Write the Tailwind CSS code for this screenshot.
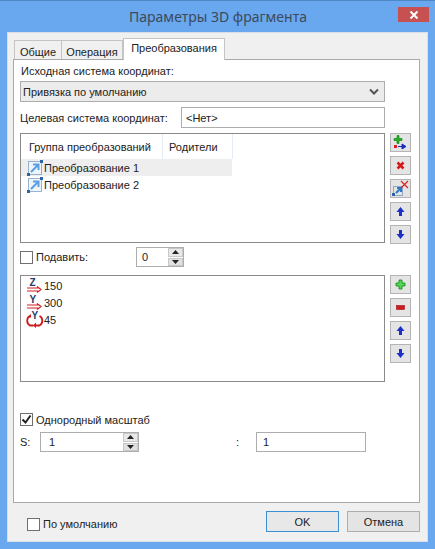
<!DOCTYPE html>
<html><head><meta charset="utf-8"><script src="https://cdn.jsdelivr.net/npm/@tailwindcss/browser@4"></script></head>
<body class="m-0 overflow-hidden">
<div class="relative w-[435px] h-[549px] bg-[#69a7ef] font-['Liberation_Sans',sans-serif] text-[11px] leading-[14px] text-[#222] flex flex-col">
  <div class="h-[1px] bg-[#4d86c4]"></div>
  <div class="h-[31px] flex items-center justify-center text-[14px] font-['Noto_Sans',sans-serif] text-[#3c4a5a] pl-[1px]">Параметры 3D фрагмента</div>
  <div class="absolute left-[398px] top-[7px] w-[31px] h-[15px] bg-[#c75050] flex items-center justify-center">
    <svg width="10" height="10" viewBox="0 0 10 10"><path d="M1.500 1.500l7 7M8.500 1.500l-7 7" stroke="#fff" stroke-width="2"/></svg>
  </div>
  <div class="mx-[7px] w-[421px] h-[510px] bg-[#f0f0f0] border border-[#d8dfe8] px-[5px] flex flex-col">
    <!-- tabs -->
    <div class="h-[27px] flex items-end pl-[1px] relative z-10">
      <div class="w-[48px] h-[19px] mb-[1px] bg-[#f0f0f0] border border-[#c4c4c4] border-b-0 flex items-center justify-center pt-[3px]">Общие</div>
      <div class="w-[61px] h-[19px] mb-[1px] bg-[#f0f0f0] border border-[#c4c4c4] border-l-0 border-b-0 flex items-center justify-center pt-[3px]">Операция</div>
      <div class="w-[102px] h-[22px] bg-white border border-[#c4c4c4] border-b-0 flex items-start justify-center pt-[2px]">Преобразования</div>
    </div>
    <!-- panel -->
    <div class="w-[407px] h-[444px] bg-white border border-[#a9a9a9] -mt-[1px] px-[6px] flex flex-col">
      <div class="h-[21px] flex items-end pl-[1px] pb-[3px]">Исходная система координат:</div>
      <div class="w-[365px] h-[21px] bg-[#ececec] border border-[#adadad] flex items-center justify-between pl-[2px] pr-[5px]">
        <span>Привязка по умолчанию</span>
        <svg width="10" height="8" viewBox="0 0 10 8"><path d="M1 1.500l4 4 4-4" fill="none" stroke="#555" stroke-width="2"/></svg>
      </div>
      <div class="h-[21px] mt-[5px] flex items-center justify-between w-[365px]">
        <span>Целевая система координат:</span>
        <div class="w-[204px] h-[21px] border border-[#adadad] bg-white flex items-center pl-[4px]">&lt;Нет&gt;</div>
      </div>
      <!-- list 1 -->
      <div class="mt-[5px] flex gap-[5px]">
        <div class="w-[365px] h-[110px] border border-[#8a8a8a] bg-white">
          <div class="h-[25px] flex">
            <div class="w-[142px] border-r border-[#e5ecf5] flex items-center pl-[8px]">Группа преобразований</div>
            <div class="w-[70px] border-r border-[#e5ecf5] flex items-center pl-[6px]">Родители</div>
          </div>
          <div class="w-[211px] h-[17px] bg-[#eeeeee] flex items-center pl-[6px] gap-[1px]">
            <svg width="16" height="16" viewBox="0 0 16 16"><rect x="1.500" y="1.500" width="13" height="13" fill="#eef5fc" stroke="#3b6ea8" stroke-dasharray="1 1"/><rect x="0" y="13" width="3" height="3" fill="#2d63a8"/><rect x="13" y="0" width="3" height="3" fill="#2d63a8"/><path d="M4 12l7-7M6 4.500h5.500V10" fill="none" stroke="#5aa0e0" stroke-width="2"/></svg>
            <span>Преобразование 1</span>
          </div>
          <div class="w-[211px] h-[17px] flex items-center pl-[6px] gap-[1px]">
            <svg width="16" height="16" viewBox="0 0 16 16"><rect x="1.500" y="1.500" width="13" height="13" fill="#eef5fc" stroke="#3b6ea8" stroke-dasharray="1 1"/><rect x="0" y="13" width="3" height="3" fill="#2d63a8"/><rect x="13" y="0" width="3" height="3" fill="#2d63a8"/><path d="M4 12l7-7M6 4.500h5.500V10" fill="none" stroke="#5aa0e0" stroke-width="2"/></svg>
            <span>Преобразование 2</span>
          </div>
        </div>
        <div class="flex flex-col gap-[4px]">
          <div class="w-[21px] h-[19px] bg-[#e4e4e4] border border-[#b4b4b4] flex items-center justify-center">
            <svg width="15" height="15" viewBox="0 0 15 15"><path d="M4 0.500h2v3h3v2H6v3H4V5.500H1v-2h3z" fill="#22b522" stroke="#0a7a0a" stroke-width=".6"/><rect x="1" y="10" width="3" height="3" fill="#d22"/><path d="M5 11.500h6M9 9l4 2.500L9 14z" fill="#1c2fb8" stroke="#1c2fb8"/></svg>
          </div>
          <div class="w-[21px] h-[19px] bg-[#e4e4e4] border border-[#b4b4b4] flex items-center justify-center">
            <svg width="9" height="9" viewBox="0 0 9 9"><path d="M1.500 1.500l6 6M7.500 1.500l-6 6" stroke="#d81818" stroke-width="2.500"/></svg>
          </div>
          <div class="w-[21px] h-[19px] bg-[#e4e4e4] border border-[#b4b4b4] flex items-center justify-center">
            <svg width="17" height="17" viewBox="0 0 17 17"><rect x="1.500" y="6.500" width="9" height="9" fill="none" stroke="#3b6ea8" stroke-dasharray="1 1"/><rect x="0" y="13" width="3" height="3" fill="#2d63a8"/><path d="M4 13l5-5M5 8h4v4" fill="none" stroke="#2f78c8" stroke-width="2"/><path d="M9 1l7 7M16 1l-7 7" stroke="#e02020" stroke-width="1.200"/></svg>
          </div>
          <div class="w-[21px] h-[19px] bg-[#e4e4e4] border border-[#b4b4b4] flex items-center justify-center">
            <svg width="9" height="11" viewBox="0 0 9 11"><path d="M4.500 1L8.500 6H6v4H3V6H.5z" fill="#1c2fc8"/></svg>
          </div>
          <div class="w-[21px] h-[19px] bg-[#e4e4e4] border border-[#b4b4b4] flex items-center justify-center">
            <svg width="9" height="11" viewBox="0 0 9 11"><path d="M4.500 10L8.500 5H6V1H3v4H.5z" fill="#1c2fc8"/></svg>
          </div>
        </div>
      </div>
      <!-- suppress -->
      <div class="h-[20px] mt-[3px] flex items-center">
        <div class="w-[13px] h-[13px] border border-[#707070] bg-white"></div>
        <span class="ml-[3px] w-[100px]">Подавить:</span>
        <div class="w-[48px] h-[20px] border border-[#adadad] bg-white flex items-center justify-between pl-[5px]">
          <span>0</span>
          <div class="w-[15px] h-[18px] flex flex-col gap-[1px]">
            <div class="flex-1 bg-[#e8e8e8] border border-[#c8c8c8] flex items-center justify-center"><svg width="7" height="4" viewBox="0 0 7 4"><path d="M3.500 0L7 4H0z" fill="#222"/></svg></div>
            <div class="flex-1 bg-[#e0e0e0] border border-[#c8c8c8] flex items-center justify-center"><svg width="7" height="4" viewBox="0 0 7 4"><path d="M3.500 4L7 0H0z" fill="#222"/></svg></div>
          </div>
        </div>
      </div>
      <!-- list 2 -->
      <div class="mt-[8px] flex gap-[5px]">
        <div class="w-[365px] h-[107px] border border-[#8a8a8a] bg-white pl-[5px] flex flex-col">
          <div class="h-[17px] flex items-center mt-[1px]">
            <svg width="18" height="17" viewBox="0 0 18 17"><text x="3.500" y="9" font-family="Liberation Sans" font-size="10" font-weight="700" fill="#2a3a6a">Z</text><path d="M1 11h11M1 14h11M11 9.500l4 3-4 3" fill="none" stroke="#d42020" stroke-width="1.200"/></svg>
            <span>150</span>
          </div>
          <div class="h-[17px] flex items-center">
            <svg width="18" height="17" viewBox="0 0 18 17"><text x="3.500" y="9" font-family="Liberation Sans" font-size="10" font-weight="700" fill="#2a3a6a">Y</text><path d="M1 11h11M1 14h11M11 9.500l4 3-4 3" fill="none" stroke="#d42020" stroke-width="1.200"/></svg>
            <span>300</span>
          </div>
          <div class="h-[17px] flex items-center">
            <svg width="18" height="17" viewBox="0 0 18 17"><text x="5.500" y="8" font-family="Liberation Sans" font-size="10" font-weight="700" fill="#2a3a6a">Y</text><path d="M4 5C0.500 6.500 0 12.500 4 14.500H7.500" fill="none" stroke="#cc1c1c" stroke-width="1.800"/><path d="M13.500 5C17 6.500 17.500 12.500 13.500 14.500H10" fill="none" stroke="#cc1c1c" stroke-width="1.800"/><path d="M1 6.500H5V3zM10 11.500v5.500L7 14.500z" fill="#cc1c1c"/></svg>
            <span>45</span>
          </div>
        </div>
        <div class="flex flex-col gap-[4px]">
          <div class="w-[21px] h-[19px] bg-[#e4e4e4] border border-[#b4b4b4] flex items-center justify-center">
            <svg width="11" height="11" viewBox="0 0 11 11"><path d="M4 1h3v3h3v3H7v3H4V7H1V4h3z" fill="#55d455" stroke="#0a8a0a" stroke-width=".8"/></svg>
          </div>
          <div class="w-[21px] h-[19px] bg-[#e4e4e4] border border-[#b4b4b4] flex items-center justify-center">
            <svg width="9" height="5" viewBox="0 0 9 5"><rect x="0.500" y="0.500" width="8" height="4" fill="#cc1c28" stroke="#a01010" stroke-width=".6"/></svg>
          </div>
          <div class="w-[21px] h-[19px] bg-[#e4e4e4] border border-[#b4b4b4] flex items-center justify-center">
            <svg width="9" height="11" viewBox="0 0 9 11"><path d="M4.500 1L8.500 6H6v4H3V6H.5z" fill="#1c2fc8"/></svg>
          </div>
          <div class="w-[21px] h-[19px] bg-[#e4e4e4] border border-[#b4b4b4] flex items-center justify-center">
            <svg width="9" height="11" viewBox="0 0 9 11"><path d="M4.500 10L8.500 5H6V1H3v4H.5z" fill="#1c2fc8"/></svg>
          </div>
        </div>
      </div>
      <!-- uniform -->
      <div class="mt-[31px] h-[13px] flex items-center">
        <div class="w-[13px] h-[13px] border border-[#707070] bg-white flex items-center justify-center"><svg width="11" height="11" viewBox="0 0 11 11"><path d="M1.500 5.500l3 3 5-7" fill="none" stroke="#222" stroke-width="2"/></svg></div>
        <span class="ml-[3px]">Однородный масштаб</span>
      </div>
      <div class="mt-[6px] h-[20px] flex items-center">
        <span class="w-[20px]">S:</span>
        <div class="w-[99px] h-[20px] border border-[#adadad] bg-white flex items-center justify-between pl-[8px]">
          <span>1</span>
          <div class="w-[15px] h-[18px] flex flex-col gap-[1px]">
            <div class="flex-1 bg-[#e8e8e8] border border-[#c8c8c8] flex items-center justify-center"><svg width="7" height="4" viewBox="0 0 7 4"><path d="M3.500 0L7 4H0z" fill="#222"/></svg></div>
            <div class="flex-1 bg-[#e0e0e0] border border-[#c8c8c8] flex items-center justify-center"><svg width="7" height="4" viewBox="0 0 7 4"><path d="M3.500 4L7 0H0z" fill="#222"/></svg></div>
          </div>
        </div>
        <span class="ml-[97px] w-[20px]">:</span>
        <div class="w-[110px] h-[20px] border border-[#adadad] bg-white flex items-center pl-[6px]">1</div>
      </div>
    </div>
    <!-- bottom -->
    <div class="flex items-start mt-[8px] h-[21px] pl-[14px]">
      <div class="flex items-center mt-[6px]">
        <div class="w-[13px] h-[13px] border border-[#707070] bg-white"></div>
        <span class="ml-[3px]">По умолчанию</span>
      </div>
      <div class="ml-auto flex gap-[8px] mr-[2px]">
        <div class="w-[73px] h-[21px] bg-[#e8e8e8] border border-[#3c8fd0] flex items-center justify-center">OK</div>
        <div class="w-[73px] h-[21px] bg-[#e4e4e4] border border-[#adadad] flex items-center justify-center">Отмена</div>
      </div>
    </div>
  </div>
</div>
</body></html>
